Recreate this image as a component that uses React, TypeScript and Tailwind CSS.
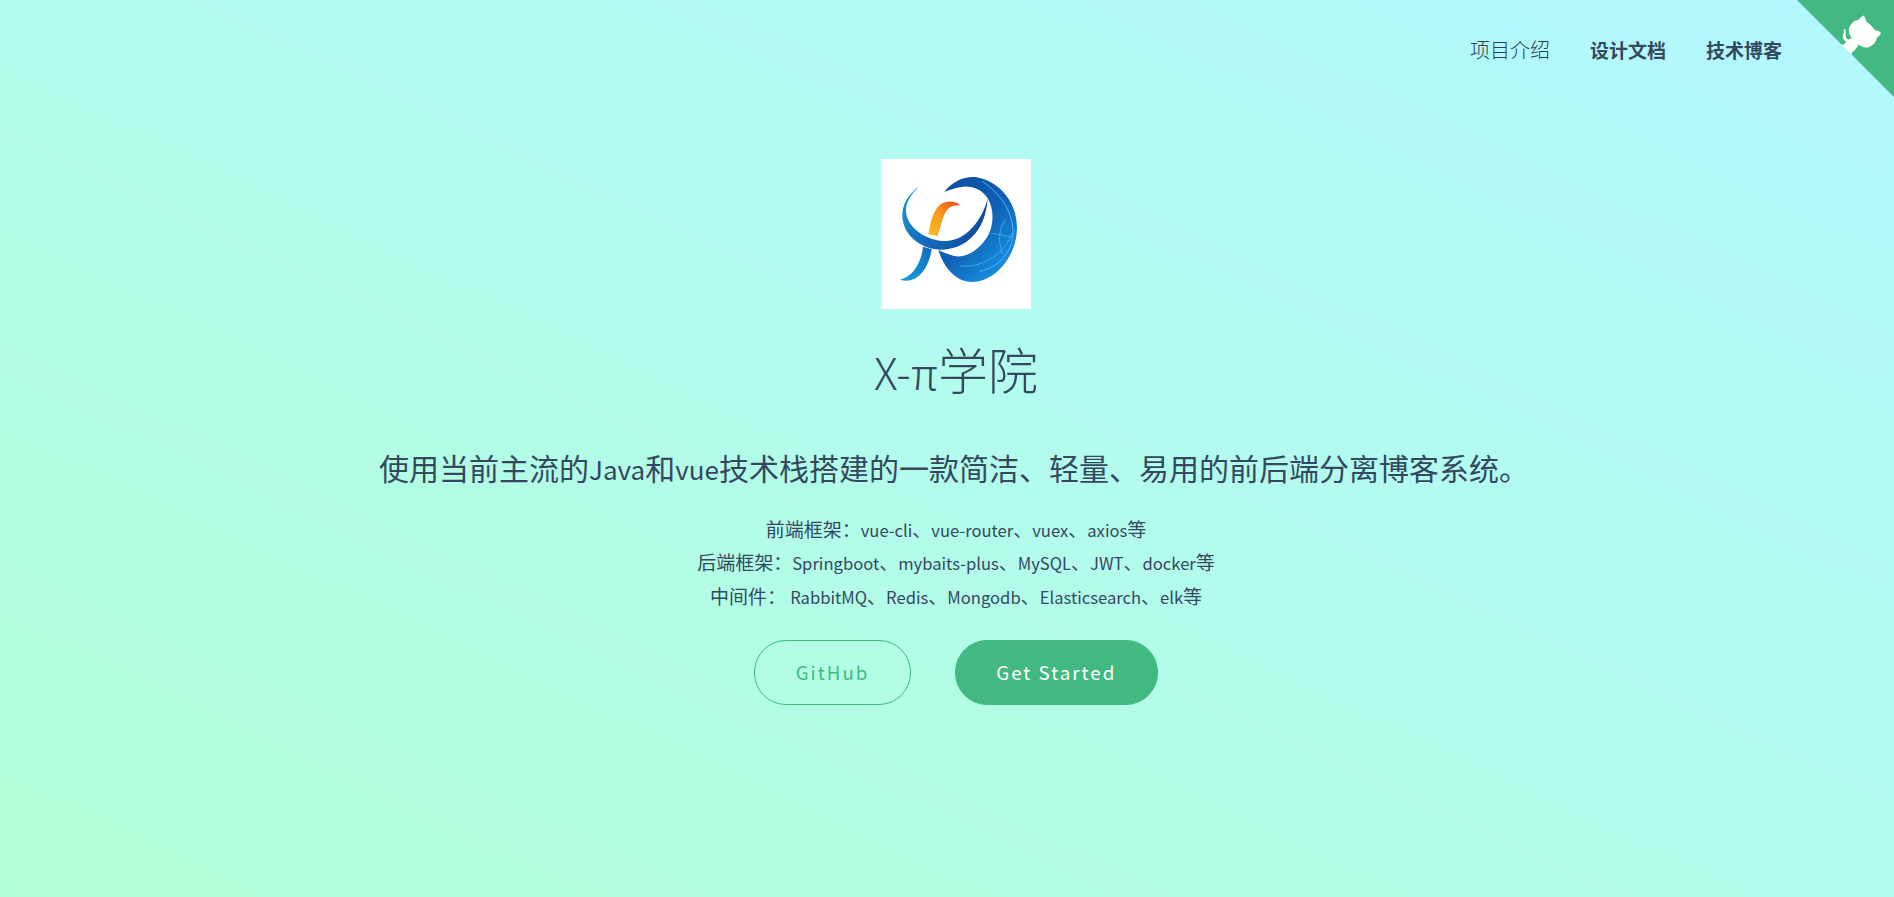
const cjk = "font-['Noto_Sans_CJK_SC',sans-serif]";

function Logo() {
  return (
    <div className="h-[150px] w-[150px] bg-white">
      <svg viewBox="-42 -33 450 450" className="h-full w-full">
        <defs>
          <linearGradient id="ring" x1="0" y1="0" x2="1" y2="0.3">
            <stop offset="0" stopColor="#1a9ad8" />
            <stop offset="0.4" stopColor="#1470bf" />
            <stop offset="1" stopColor="#0e4ea2" />
          </linearGradient>
          <linearGradient id="globe" x1="0.1" y1="0" x2="0.9" y2="1">
            <stop offset="0" stopColor="#0d4ca0" />
            <stop offset="0.5" stopColor="#1062b6" />
            <stop offset="0.8" stopColor="#1586d6" />
            <stop offset="1" stopColor="#1b94e4" />
          </linearGradient>
          <linearGradient id="tail" x1="0" y1="1" x2="1" y2="0">
            <stop offset="0" stopColor="#1a9fdc" />
            <stop offset="1" stopColor="#106cbc" />
          </linearGradient>
          <linearGradient id="flame" x1="0" y1="1" x2="1" y2="0">
            <stop offset="0" stopColor="#f8c020" />
            <stop offset="0.5" stopColor="#f3981e" />
            <stop offset="0.8" stopColor="#ef661c" />
            <stop offset="1" stopColor="#e8391d" />
          </linearGradient>
        </defs>
        <path
          d="M72 50C40 72 22 102 22 135C22 190 70 236 135 239C205 241 272 190 278 85C262 150 215 210 155 213C90 214 33 168 33 122C33 95 48 72 72 50Z"
          fill="url(#ring)"
        />
        <path
          d="M84 230C80 275 55 320 15 329C62 344 100 302 110 238Z"
          fill="url(#tail)"
        />
        <path
          d="M148 66C175 32 210 18 245 22C314 34 366 98 366 172C366 262 297 336 232 336C185 336 148 297 130 240C140 245 150 250 160 252C205 275 255 240 280 195C298 160 296 115 278 85C262 60 235 48 205 50C185 52 165 58 148 66Z"
          fill="url(#globe)"
        />
        <path
          d="M262 34C315 70 350 120 354 180C357 245 310 292 255 304"
          fill="none"
          stroke="#4db4f5"
          strokeWidth="3"
        />
        <path
          d="M195 288C265 295 330 250 354 185M288 190C310 192 332 198 354 203M332 148C312 175 308 210 322 252"
          fill="none"
          stroke="#3aa8f0"
          strokeWidth="3"
        />
        <path
          d="M100 193C106 160 112 125 135 104C155 90 180 92 198 107C175 103 160 112 150 130C141 150 135 175 128 198Z"
          fill="url(#flame)"
        />
      </svg>
    </div>
  );
}

function GithubCorner() {
  return (
    <a href="#" className="absolute right-0 top-0">
      <svg viewBox="0 0 250 250" className="h-[97px] w-[97px] fill-[#42b983] text-white">
        <path d="M0,0 L115,115 L130,115 L142,142 L250,250 L250,0 Z" />
        <path
          d="M128.3,109.0 C113.8,99.7 119.0,89.6 119.0,89.6 C122.0,82.7 120.5,78.6 120.5,78.6 C119.2,72.0 123.4,76.3 123.4,76.3 C127.3,80.9 125.5,87.3 125.5,87.3 C122.9,97.6 130.6,101.9 134.4,103.2"
          fill="currentColor"
        />
        <path
          d="M115.0,115.0 C114.9,115.1 118.7,116.5 119.8,115.4 L133.7,101.6 C136.9,99.2 139.9,98.4 142.2,98.6 C133.8,88.0 127.5,74.4 143.8,58.0 C148.5,53.4 154.0,51.2 159.7,51.0 C160.3,49.4 163.2,43.6 171.4,40.1 C171.4,40.1 176.1,42.5 178.8,56.2 C183.1,58.6 187.2,61.8 190.9,65.4 C194.5,69.0 197.7,73.2 200.1,77.6 C213.8,80.2 216.3,84.9 216.3,84.9 C212.7,93.1 206.9,96.0 205.4,96.6 C205.1,102.4 203.0,107.8 198.3,112.5 C181.9,128.9 168.3,122.5 157.7,114.1 C157.9,116.9 156.7,120.9 152.7,124.9 L141.0,136.5 C139.8,137.7 141.6,141.9 141.8,141.8 Z"
          fill="currentColor"
        />
      </svg>
    </a>
  );
}

function L({ children }: { children: string }) {
  return <span className="text-[16.6px] leading-none">{children}</span>;
}

function Q({ children }: { children: string }) {
  return <span className="text-[26px] leading-none">{children}</span>;
}

export default function App() {
  return (
    <div
      className={`relative flex h-[897px] flex-col items-center overflow-hidden bg-gradient-to-bl from-[#b3f7ff] to-[#b3ffd7] text-[#34495e] ${cjk}`}
    >
      <nav className="flex w-full justify-end gap-[40px] pr-[112px] pt-[36px] leading-[28px]">
        <a href="#" className="text-[20px] font-light text-[#2c3e50]">项目介绍</a>
        <a href="#" className="text-[19px] font-bold">设计文档</a>
        <a href="#" className="text-[19px] font-bold">技术博客</a>
      </nav>
      <GithubCorner />

      <div className="mt-[95px] flex flex-col items-center">
        <div className="flex flex-col items-center pl-[18px]">
          <Logo />
          <h1 className="mt-[24px] text-[50px] font-light leading-[70px]">
            <span className="text-[43.5px] leading-none">X-π</span>学院
          </h1>
        </div>
        <p className="mt-[44px] pl-[14px] text-[30px] leading-[40px]">
          使用当前主流的<Q>Java</Q>和<Q>vue</Q>技术栈搭建的一款简洁、轻量、易用的前后端分离博客系统。
        </p>
        <div className="flex flex-col items-center pl-[18px]">
          <ul className="mt-[25px] flex flex-col items-center text-[19px] leading-[33.4px]">
            <li>前端框架：<L>vue-cli</L>、<L>vue-router</L>、<L>vuex</L>、<L>axios</L>等</li>
            <li>后端框架：<L>Springboot</L>、<L>mybaits-plus</L>、<L>MySQL</L>、<L>JWT</L>、<L>docker</L>等</li>
            <li>中间件： <L>RabbitMQ</L>、<L>Redis</L>、<L>Mongodb</L>、<L>Elasticsearch</L>、<L>elk</L>等</li>
          </ul>
          <div className="mt-[28px] flex gap-[44px]">
            <a
              href="#"
              className="rounded-[32px] border border-[#42b983] px-[40.5px] py-[14px] text-[18.7px] leading-[34.5px] tracking-[2px] text-[#42b983]"
            >
              GitHub
            </a>
            <a
              href="#"
              className="rounded-[32px] border border-[#42b983] bg-[#42b983] px-[40.5px] py-[14px] text-[18.7px] leading-[34.5px] tracking-[2px] text-white"
            >
              Get Started
            </a>
          </div>
        </div>
      </div>
    </div>
  );
}
